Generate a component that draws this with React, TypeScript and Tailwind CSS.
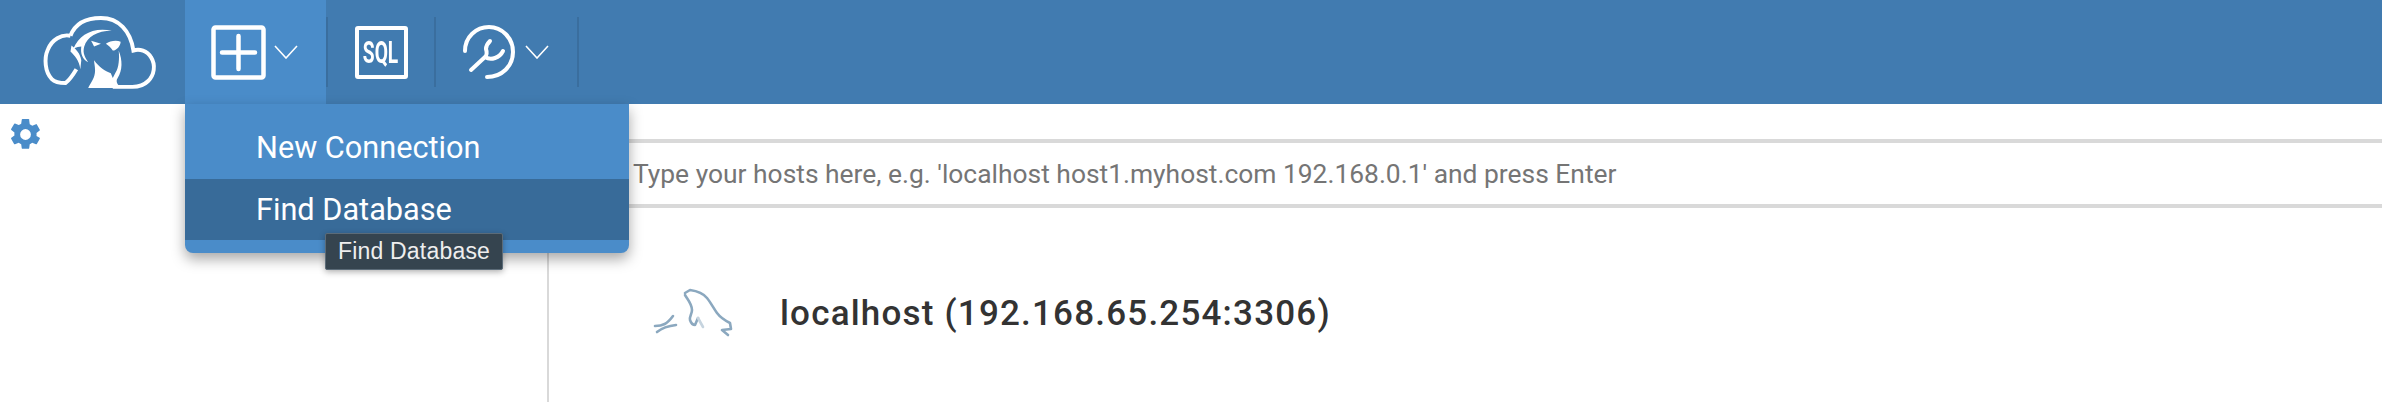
const chevron = (
  <svg width="24" height="14" viewBox="0 0 24 14" fill="none" stroke="white" strokeWidth="1.6">
    <path d="M1 1l11 12L23 1" />
  </svg>
);

function Logo() {
  return (
    <svg width="118" height="77" viewBox="0 0 120 78" fill="none">
      <path
        d="M31 23C22 21 12 27 8 37 4 46 5 60 12 67c3 3 8 4 14 4 4-3 8-9 11-14"
        stroke="white"
        strokeWidth="4"
      />
      <path d="M31 23C36 10 48 5 62 5c18 0 30 13 33 33 6-2 14 0 18 7 5 8 3 18-3 24-4 4-10 6-16 6H74" stroke="white" strokeWidth="4" />
      {/* ear fold and head line */}
      <path d="M32 33c4 3 9 8 10 15l-1 9c-1-9-6-14-10-18z" fill="white" />
      <path d="M34 36C40 22 54 14 73 18 58 18 48 24 45 34c-2 7 1 11 4 16-6-3-8-9-7-16-2 0-5 1-8 2z" fill="white" />
      <path d="M52 28l10 3-7 3z" fill="white" />
      <path d="M67 31c4-3 11-4 15-2 0 4-4 9-8 9-2-3-4-5-7-7z" fill="white" />
      <path d="M55 48c5 7 11 11 17 13l2 5 3-6c3-4 4-14 3-22 4 10 4 20-1 28-3 4 1 9 5 10H49c3-6 7-10 7-18 0-4-1-7-1-10z" fill="white" />
    </svg>
  );
}

function Wrench() {
  return (
    <svg width="52" height="54" viewBox="0 0 52 54" fill="none" stroke="white" strokeWidth="4" strokeLinecap="round">
      <path d="M2 26C2 12 13 2 26 2s24 11 24 25-11 25-26 25" />
      <path d="M8 45l14-13M22 32c2-2 2-5 1-8 0-3 2-6 4-8M22 32c3 2 7 2 10 1 3-1 6-3 8-7" />
    </svg>
  );
}

function Dolphin() {
  return (
    <svg width="85" height="55" viewBox="20 15 85 55" fill="none" stroke="#8ba8bf" strokeWidth="2.6" strokeLinecap="round" strokeLinejoin="round" className="blur-[0.7px]">
      <path d="M55 23l5-3c7 1 13 3 17 8 4 5 7 11 10 15 3 4 7 7 13 10l1 6-9 1 6 5" />
      <path d="M55 25c3 5 7 9 7 15 0 4-3 7-2 10 1 3 3 5 5 5l3-7" />
      <path d="M68 48l5 9" stroke="#c6d4df" />
      <path d="M25 56c8 0 12-2 18-10M27 62c5-4 10-6 19-7" />
    </svg>
  );
}

export default function App() {
  return (
    <div className="relative h-[402px] w-[2382px] overflow-hidden bg-white font-['Roboto',sans-serif]">
      <header className="flex h-[104px] items-center bg-[#417bb0]">
        <div className="w-[185px] pb-[2px] pl-[40px]">
          <Logo />
        </div>
        <div className="relative flex h-full w-[141px] items-center gap-[8px] bg-[#4a8cc9] pl-[26px]">
          <svg width="55" height="55" viewBox="0 0 55 55" fill="none" stroke="white" strokeWidth="4.5" strokeLinecap="round">
            <rect x="2.5" y="2.5" width="50" height="50" rx="2" />
            <path d="M27.5 11v33M11 27.5h33" />
          </svg>
          {chevron}
          <div className="absolute left-0 top-[104px] z-10 w-[444px] rounded-b-[8px] bg-[#4a8cc9] pb-[13px] pt-[14px] text-[30.7px] text-white shadow-[0_6px_14px_rgba(0,0,0,0.35)]">
            <div className="flex h-[61px] items-center pl-[71px]">New Connection</div>
            <div className="flex h-[61px] items-center bg-[#386b99] pt-[2px] pl-[71px]">Find Database</div>
            <div className="absolute left-[140px] top-[129px] flex h-[37px] w-[178px] items-center justify-center rounded-[2px] border border-[#5b6b78] bg-[#35444f] text-[23px] tracking-[0.2px] whitespace-nowrap text-[#eeeeee] shadow-[0_2px_6px_rgba(0,0,0,0.3)] [font-family:'Liberation_Sans',sans-serif]">
              Find Database
            </div>
          </div>
        </div>
        <div className="flex h-[70px] w-[110px] items-center justify-center border-x-2 border-[#3a6e9e]">
          <div className="flex h-[53px] w-[53px] items-center justify-center rounded-[3px] border-4 border-white text-white">
            <span className="inline-block scale-x-[0.6] text-[32px] leading-none font-bold">SQL</span>
          </div>
        </div>
        <div className="flex h-[70px] w-[143px] items-center gap-[10px] border-r-2 border-[#3a6e9e] pl-[27px]">
          <Wrench />
          {chevron}
        </div>
      </header>
      <div className="flex h-[298px]">
        <aside className="w-[549px] border-r-2 border-[#d9d9d9] pl-[7px] pt-[12px]">
          <svg width="37" height="37" viewBox="0 0 24 24" fill="#4a8cc9">
            <path d="M19.14 12.94a7.5 7.5 0 0 0 0-1.88l2.03-1.58a.5.5 0 0 0 .12-.64l-1.92-3.32a.5.5 0 0 0-.6-.22l-2.39.96a7 7 0 0 0-1.62-.94l-.36-2.54A.5.5 0 0 0 13.9 2h-3.84a.5.5 0 0 0-.49.42l-.36 2.54a7 7 0 0 0-1.62.94l-2.39-.96a.5.5 0 0 0-.6.22L2.68 8.48a.5.5 0 0 0 .12.64l2.03 1.58a7.5 7.5 0 0 0 0 1.88L2.8 14.16a.5.5 0 0 0-.12.64l1.92 3.32c.13.22.39.3.6.22l2.39-.96c.5.38 1.04.7 1.62.94l.36 2.54c.05.24.26.42.49.42h3.84c.24 0 .44-.18.49-.42l.36-2.54a7 7 0 0 0 1.62-.94l2.39.96c.22.08.47 0 .6-.22l1.92-3.32a.5.5 0 0 0-.12-.64zM12 15.5a3.5 3.5 0 1 1 0-7 3.5 3.5 0 0 1 0 7z" />
          </svg>
        </aside>
        <main className="flex-1">
          <input
            className="mt-[35px] h-[69px] w-full border-y-4 border-[#d9d9d9] pl-[84px] text-[26.4px] outline-none placeholder:text-[#757575]"
            placeholder="Type your hosts here, e.g. 'localhost host1.myhost.com 192.168.0.1' and press Enter"
          />
          <div className="mt-[77px] flex items-center pl-[101px]">
            <Dolphin />
            <span className="ml-[45px] pt-[3px] text-[35px] font-medium tracking-[1.2px] text-[#333333]">localhost (192.168.65.254:3306)</span>
          </div>
        </main>
      </div>
    </div>
  );
}
